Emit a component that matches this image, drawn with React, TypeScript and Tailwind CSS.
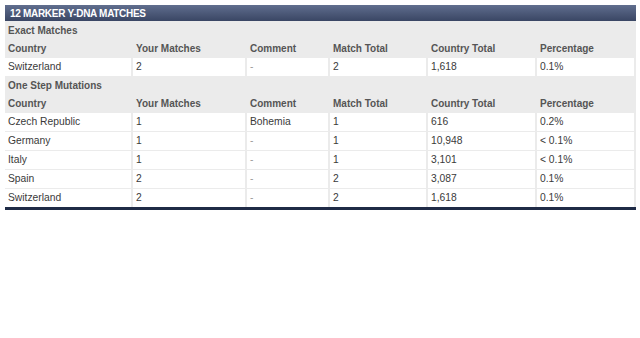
import React from "react";

const cols = "grid grid-cols-[126px_112px_81px_96px_107px_97px] gap-x-[2px]";

const headers = ["Country", "Your Matches", "Comment", "Match Total", "Country Total", "Percentage"];

type Row = [string, string, string, string, string, string];

const exact: Row[] = [["Switzerland", "2", "-", "2", "1,618", "0.1%"]];
const oneStep: Row[] = [
  ["Czech Republic", "1", "Bohemia", "1", "616", "0.2%"],
  ["Germany", "1", "-", "1", "10,948", "< 0.1%"],
  ["Italy", "1", "-", "1", "3,101", "< 0.1%"],
  ["Spain", "2", "-", "2", "3,087", "0.1%"],
  ["Switzerland", "2", "-", "2", "1,618", "0.1%"],
];

function SectionLabel({ text }: { text: string }) {
  return (
    <div className="h-[18px] flex items-center pl-[3px] text-[10px] font-bold text-[#555555]">
      {text}
    </div>
  );
}

function HeaderRow() {
  return (
    <div className={`${cols} h-[18px]`}>
      {headers.map((h) => (
        <div key={h} className="flex items-center pl-[3px] text-[10px] font-bold text-[#555555] whitespace-nowrap">
          {h}
        </div>
      ))}
    </div>
  );
}

function DataRow({ row }: { row: Row }) {
  return (
    <div className={`${cols} mt-[1px] h-[18px]`}>
      {row.map((c, i) => (
        <div
          key={i}
          className={`bg-white flex items-center pl-[3px] text-[10.3px] whitespace-nowrap ${
            c === "-" ? "text-[#9a9a9a]" : "text-[#3a3a3a]"
          }`}
        >
          {c}
        </div>
      ))}
    </div>
  );
}

export default function App() {
  return (
    <div className="w-[640px] h-[338px] bg-white pt-[5px] pl-[5px]" style={{ fontFamily: '"Liberation Sans", Arial, sans-serif' }}>
      <div className="w-[631px]">
        <div className="h-[16px] flex items-center pl-[5px] bg-gradient-to-b from-[#606e8e] to-[#3a4664] text-white text-[10px] font-bold tracking-[-0.3px]">
          12 MARKER Y-DNA MATCHES
        </div>
        <div className="bg-[#ebebeb] pr-[2px] border-b-[3px] border-[#1f2b46]">
          <SectionLabel text="Exact Matches" />
          <HeaderRow />
          {exact.map((r, i) => (
            <DataRow key={i} row={r} />
          ))}
          <SectionLabel text="One Step Mutations" />
          <HeaderRow />
          {oneStep.map((r, i) => (
            <DataRow key={i} row={r} />
          ))}
        </div>
      </div>
    </div>
  );
}
